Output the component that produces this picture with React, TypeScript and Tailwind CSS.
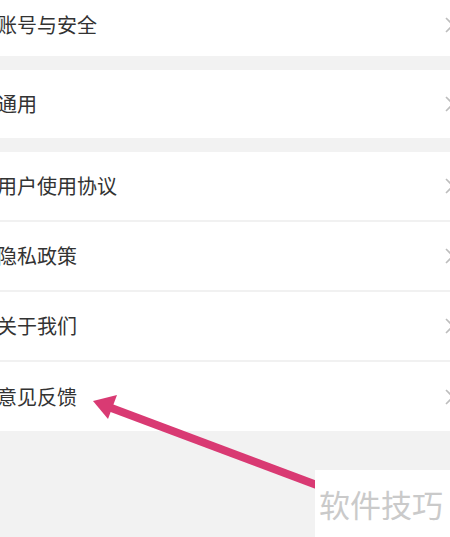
import React from 'react';

const Chevron = () => (
  <svg width="12" height="18" viewBox="0 0 12 18" className="shrink-0 -mr-[6px]">
    <path d="M2 2 L9 9 L2 16" fill="none" stroke="#bdbdbd" strokeWidth="1.6" />
  </svg>
);

const Row = ({ label, h, divider }: { label: string; h: string; divider?: boolean }) => (
  <div className={`flex items-center justify-between bg-white ${h} ${divider ? 'border-b-2 border-[#f1f1f1]' : ''}`}>
    <span className="-ml-[3px] text-[20px] text-[#333] leading-none">{label}</span>
    <Chevron />
  </div>
);

const App = () => {
  const group3 = ['用户使用协议', '隐私政策', '关于我们', '意见反馈'];

  return (
    <div
      className="relative w-[450px] h-[537px] overflow-hidden bg-[#f2f2f2]"
      style={{ fontFamily: '"Noto Sans CJK SC", "Noto Sans", sans-serif' }}
    >
      <div className="flex flex-col">
        <div className="bg-white h-[56px] flex items-center justify-between pb-[6px]">
          <span className="-ml-[3px] text-[20px] text-[#333] leading-none">账号与安全</span>
          <Chevron />
        </div>
        <div className="h-[14px]" />
        <Row label="通用" h="h-[68px]" />
        <div className="h-[14px]" />
        <div className="flex flex-col">
          {group3.map((label, i) => (
            <Row key={i} label={label} h={i === 3 ? 'h-[69px]' : 'h-[70px]'} divider={i < 3} />
          ))}
        </div>
      </div>

      {/* annotation arrow */}
      <svg className="absolute left-0 top-0 pointer-events-none" width="450" height="537">
        <line x1="106" y1="406" x2="322" y2="487" stroke="#d93a73" strokeWidth="8" />
        <polygon points="93,401 117,395 108,419" fill="#d93a73" />
      </svg>

      {/* watermark */}
      <div className="absolute left-[315px] top-[470px] w-[135px] h-[67px] bg-white flex items-center pl-[4px]">
        <span className="text-[31px] text-[#cacaca] leading-none tracking-[0px]">软件技巧</span>
      </div>
    </div>
  );
};

export default App;
